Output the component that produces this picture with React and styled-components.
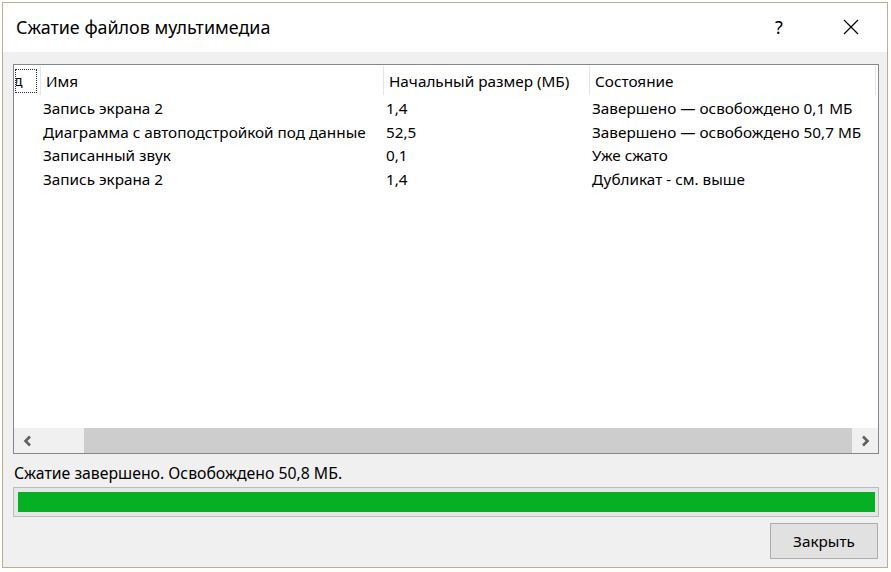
import React from 'react';
import styled, { createGlobalStyle } from "styled-components";

const GlobalStyle = createGlobalStyle`
    html, body {
        margin: 0;
        padding: 0;
        background: #ffffff;
    }
    body {
        font-family: "Noto Sans", "Liberation Sans", sans-serif;
        color: #000;
    }
`;

const files = [
    { name: "Запись экрана 2", size: "1,4", state: "Завершено — освобождено 0,1 МБ" },
    { name: "Диаграмма с автоподстройкой под данные", size: "52,5", state: "Завершено — освобождено 50,7 МБ" },
    { name: "Записанный звук", size: "0,1", state: "Уже сжато" },
    { name: "Запись экрана 2", size: "1,4", state: "Дубликат - см. выше" },
];

const columns = "27px 343px 206px 286px";

function Chevron({ dir }) {
    const d = dir === "left" ? "M7 1.5 L2.5 6 L7 10.5" : "M2 1.5 L6.5 6 L2 10.5";
    return (
        <svg width="9" height="12" viewBox="0 0 9 12">
            <path d={d} fill="none" stroke="#606060" strokeWidth="2.6" />
        </svg>
    );
}

function App() {
    return (
        <Page>
            <GlobalStyle />
            <Dialog>
                <TitleBar>
                    <Title>Сжатие файлов мультимедиа</Title>
                    <CaptionButton>?</CaptionButton>
                    <CaptionButton>
                        <svg width="16" height="16" viewBox="0 0 16 16">
                            <path d="M1 1 L15 15 M15 1 L1 15" stroke="#000" strokeWidth="1.2" />
                        </svg>
                    </CaptionButton>
                </TitleBar>
                <Body>
                    <ListBox>
                        <HeaderRow>
                            <HeaderCell>
                                <FocusBox>д</FocusBox>
                            </HeaderCell>
                            <HeaderCell>Имя</HeaderCell>
                            <HeaderCell>Начальный размер (МБ)</HeaderCell>
                            <HeaderCell>Состояние</HeaderCell>
                        </HeaderRow>
                        <Rows>
                            {files.map((f, i) => (
                                <Row key={i}>
                                    <Cell />
                                    <Cell>{f.name}</Cell>
                                    <Cell>{f.size}</Cell>
                                    <Cell>{f.state}</Cell>
                                </Row>
                            ))}
                        </Rows>
                        <ScrollBar>
                            <ArrowButton><Chevron dir="left" /></ArrowButton>
                            <Track>
                                <Thumb />
                            </Track>
                            <ArrowButton><Chevron dir="right" /></ArrowButton>
                        </ScrollBar>
                    </ListBox>
                    <Status>Сжатие завершено. Освобождено 50,8 МБ.</Status>
                    <Progress>
                        <ProgressFill style={{ width: "100%" }} />
                    </Progress>
                    <Footer>
                        <Button>Закрыть</Button>
                    </Footer>
                </Body>
            </Dialog>
        </Page>
    );
}

const Page = styled.div`
    padding: 2px 3px 4px 2px;
    width: 891px;
    height: 572px;
    box-sizing: border-box;
`;

const Dialog = styled.div`
    height: 566px;
    border: 1px solid #bfae8b;
    display: flex;
    flex-direction: column;
    box-sizing: border-box;
    background: #f0f0f0;
`;

const TitleBar = styled.div`
    height: 49px;
    background: #fff;
    display: flex;
    align-items: center;
    padding: 0 13px 0 13px;
    flex-shrink: 0;
`;

const Title = styled.div`
    flex: 1;
    font-size: 17.9px;
    padding-bottom: 2px;
`;

const CaptionButton = styled.div`
    width: 46px;
    display: flex;
    justify-content: center;
    align-items: center;
    font-size: 18px;
    margin-left: 26px;
    padding-bottom: 2px;

    &:first-of-type {
        margin-left: 0;
    }
`;

const Body = styled.div`
    flex: 1;
    display: flex;
    flex-direction: column;
    padding: 12px 8px 10px 10px;
`;

const ListBox = styled.div`
    height: 390px;
    border: 1px solid #828790;
    background: #fff;
    box-sizing: border-box;
    display: flex;
    flex-direction: column;
`;

const HeaderRow = styled.div`
    display: grid;
    grid-template-columns: ${columns};
    height: 29px;
    padding-top: 1px;
`;

const HeaderCell = styled.div`
    display: flex;
    align-items: center;
    padding-left: 5px;
    font-size: 15.3px;
    border-right: 1px solid #e5e5e5;
    white-space: nowrap;
    overflow: hidden;

    &:first-child {
        padding-left: 1px;
    }
`;

const FocusBox = styled.div`
    width: 20px;
    height: 22px;
    border: 1px dotted #303030;
    font-size: 14px;
    line-height: 21px;
    text-indent: -2px;
    overflow: hidden;
`;

const Rows = styled.div`
    flex: 1;
    padding-top: 1px;
`;

const Row = styled.div`
    display: grid;
    grid-template-columns: ${columns};
    height: 23.7px;
    align-items: center;
`;

const Cell = styled.div`
    font-size: 15.3px;
    padding-left: 2px;
    white-space: nowrap;
    overflow: hidden;
`;

const ScrollBar = styled.div`
    height: 25px;
    display: flex;
    background: #f0f0f0;
`;

const ArrowButton = styled.div`
    width: 26px;
    display: flex;
    align-items: center;
    justify-content: center;
`;

const Track = styled.div`
    flex: 1;
    display: flex;
    justify-content: flex-end;
`;

const Thumb = styled.div`
    width: 768px;
    background: #cdcdcd;
`;

const Status = styled.div`
    font-size: 15.8px;
    margin-top: 8px;
    height: 22px;
    display: flex;
    align-items: center;
    padding-left: 1px;
`;

const Progress = styled.div`
    margin-top: 3px;
    height: 30px;
    border: 1px solid #bcbcbc;
    background: #e6e6e6;
    box-sizing: border-box;
    padding: 4px 3px 4px 4px;
`;

const ProgressFill = styled.div`
    height: 100%;
    background: #06b025;
`;

const Footer = styled.div`
    display: flex;
    justify-content: flex-end;
    margin-top: 6px;
`;

const Button = styled.div`
    width: 108px;
    height: 36px;
    box-sizing: border-box;
    border: 1px solid #adadad;
    background: #e1e1e1;
    display: flex;
    align-items: center;
    justify-content: center;
    font-size: 15.3px;
    margin-right: 1px;
`;

export default App;
